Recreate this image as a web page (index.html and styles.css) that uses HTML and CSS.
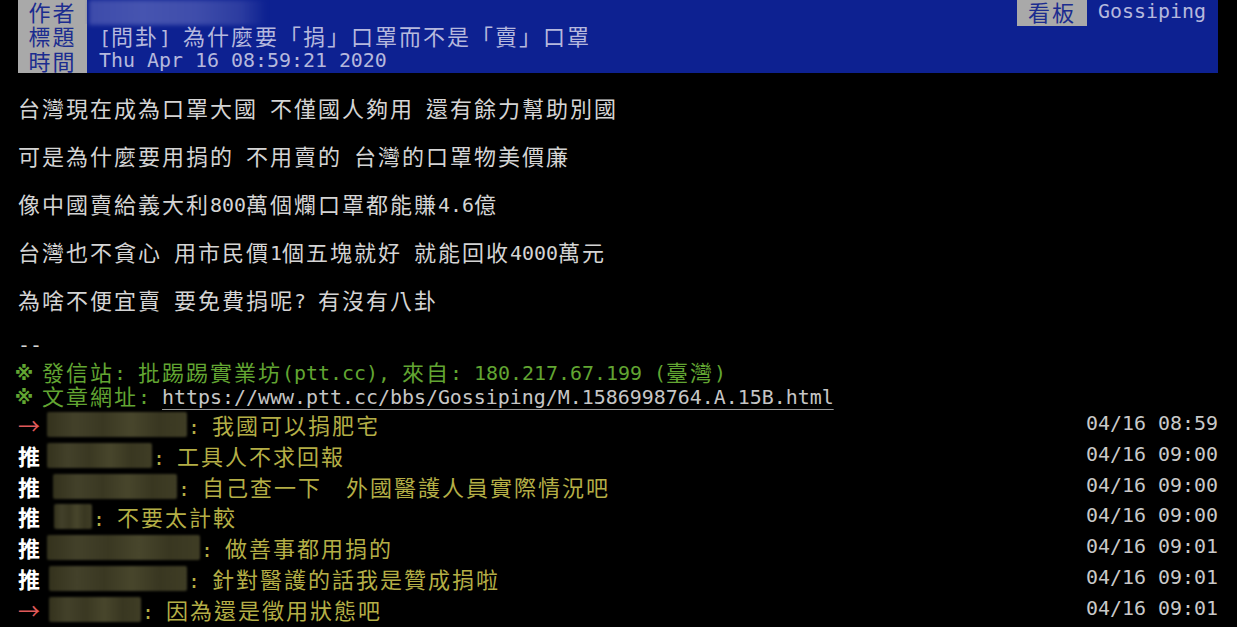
FILE: index.html
```html
<!DOCTYPE html>
<html lang="zh-Hant">
<head>
<meta charset="utf-8">
<title>[問卦] 為什麼要「捐」口罩而不是「賣」口罩</title>
<link rel="stylesheet" href="styles.css">
</head>
<body>
<div class="page">
  <header class="meta">
    <div class="meta-row">
      <span class="tag c">作者</span><span class="val author"><span class="author-blur"></span></span>
      <span class="spacer"></span>
      <span class="tag board c">看板</span><span class="val board-name">Gossiping</span>
    </div>
    <div class="meta-row">
      <span class="tag c">標題</span><span class="val">[<span class="c">問卦</span>] <span class="c">為什麼要「捐」口罩而不是「賣」口罩</span></span>
    </div>
    <div class="meta-row">
      <span class="tag c">時間</span><span class="val">Thu Apr 16 08:59:21 2020</span>
    </div>
  </header>

  <main class="content">
    <div class="line"></div>
    <div class="line"><span class="c">台灣現在成為口罩大國</span> <span class="c">不僅國人夠用</span> <span class="c">還有餘力幫助別國</span></div>
    <div class="line"></div>
    <div class="line"><span class="c">可是為什麼要用捐的</span> <span class="c">不用賣的</span> <span class="c">台灣的口罩物美價廉</span></div>
    <div class="line"></div>
    <div class="line"><span class="c">像中國賣給義大利</span>800<span class="c">萬個爛口罩都能賺</span>4.6<span class="c">億</span></div>
    <div class="line"></div>
    <div class="line"><span class="c">台灣也不貪心</span> <span class="c">用市民價</span>1<span class="c">個五塊就好</span> <span class="c">就能回收</span>4000<span class="c">萬元</span></div>
    <div class="line"></div>
    <div class="line"><span class="c">為啥不便宜賣</span> <span class="c">要免費捐呢</span>? <span class="c">有沒有八卦</span></div>
    <div class="line"></div>
    <div class="line">--</div>
    <div class="line green"><span class="kome">※</span> <span class="c">發信站</span>: <span class="c">批踢踢實業坊</span>(ptt.cc), <span class="c">來自</span>: 180.217.67.199 (<span class="c">臺灣</span>)</div>
    <div class="line green"><span class="kome">※</span> <span class="c">文章網址</span>: <a class="url" href="#">https://www.ptt.cc/bbs/Gossiping/M.1586998764.A.15B.html</a></div>

    <div class="push"><span class="ptag arrow c">→</span><span class="uid u1"></span><span class="pc">: <span class="c">我國可以捐肥宅</span></span><span class="ptime">04/16 08:59</span></div>
    <div class="push"><span class="ptag c">推</span><span class="uid u2"></span><span class="pc">: <span class="c">工具人不求回報</span></span><span class="ptime">04/16 09:00</span></div>
    <div class="push"><span class="ptag c">推</span><span class="uid u3"></span><span class="pc">: <span class="c">自己查一下</span>  <span class="c">外國醫護人員實際情況吧</span></span><span class="ptime">04/16 09:00</span></div>
    <div class="push"><span class="ptag c">推</span><span class="uid u4"></span><span class="pc">: <span class="c">不要太計較</span></span><span class="ptime">04/16 09:00</span></div>
    <div class="push"><span class="ptag c">推</span><span class="uid u5"></span><span class="pc">: <span class="c">做善事都用捐的</span></span><span class="ptime">04/16 09:01</span></div>
    <div class="push"><span class="ptag c">推</span><span class="uid u6"></span><span class="pc">: <span class="c">針對醫護的話我是贊成捐啦</span></span><span class="ptime">04/16 09:01</span></div>
    <div class="push"><span class="ptag arrow c">→</span><span class="uid u7"></span><span class="pc">: <span class="c">因為還是徵用狀態吧</span></span><span class="ptime">04/16 09:01</span></div>
  </main>
</div>
</body>
</html>
```

FILE: styles.css
```css
html, body {
  margin: 0;
  padding: 0;
  background: #000;
}

body {
  width: 1237px;
  height: 627px;
  overflow: hidden;
  font-family: "DejaVu Sans Mono", "Noto Sans CJK TC", monospace;
  font-size: 19.93px;
  line-height: 24px;
  color: #d4d4d4;
}

.page {
  padding-left: 18px;
  width: 1200px;
}

.c {
  font-family: "Noto Sans CJK TC", "Noto Sans CJK SC", sans-serif;
  font-size: 22px;
  letter-spacing: 2px;
  position: relative;
  top: 1px;
}

/* header */
.meta {
  height: 73px;
  background: #0d2191;
  display: flex;
  flex-direction: column;
}

.meta-row {
  display: flex;
  align-items: stretch;
  height: 24.33px;
  line-height: 23px;
  white-space: pre;
}

.meta .c {
  top: 0;
}

.tag {
  width: 69px;
  text-align: center;
  background: #a9a9a9;
  color: #1b2c8f;
}

.tag.board {
  width: 70px;
  height: 26px;
}

.val {
  padding-left: 12px;
  color: #b5b8dd;
}

.author {
  padding-left: 2px;
  display: flex;
}

.author-blur {
  width: 178px;
  height: 25px;
  background: linear-gradient(90deg, #3d4baa 0%, #4654b0 30%, #3f4dab 60%, #2c3ca0 85%, rgba(13, 33, 145, 0) 100%);
  filter: blur(2px);
}

.spacer {
  flex: 1;
}

.board-name {
  padding-left: 11px;
  padding-right: 12px;
}

/* body */
.content {
  padding-top: 1px;
}

.line {
  height: 24px;
  line-height: 16px;
  white-space: pre;
}

.green {
  color: #62a532;
}

.kome {
  display: inline-flex;
  justify-content: center;
  width: 12px;
  font-family: "DejaVu Sans", "Noto Sans CJK TC", sans-serif;
  font-size: 19px;
  font-weight: 700;
}

.url {
  color: #c6c6c6;
  text-decoration: underline;
  text-decoration-color: #9a9a9a;
  text-underline-offset: 5px;
}

/* pushes */
.push {
  display: flex;
  align-items: flex-start;
  height: 30.8px;
  line-height: 28px;
  white-space: pre;
}

.push .c {
  top: 0;
}

.ptag {
  width: 24px;
  color: #fff;
  font-weight: 700;
  letter-spacing: 0;
}

.ptag.arrow {
  color: #e05a5a;
  font-weight: 400;
}

.uid {
  display: block;
  height: 25px;
  margin-top: 2px;
  border-radius: 2px;
  background: linear-gradient(90deg, #34321d 0%, #43412a 20%, #3a3822 40%, #48462c 60%, #393721 80%, #3f3d25 100%);
  filter: blur(1px);
}

.u1 { margin-left: 5px; width: 140px; }
.u2 { margin-left: 5px; width: 105px; }
.u3 { margin-left: 11px; width: 124px; }
.u4 { margin-left: 12px; width: 38px; }
.u5 { margin-left: 5px; width: 153px; }
.u6 { margin-left: 7px; width: 138px; }
.u7 { margin-left: 7px; width: 92px; }

.pc {
  margin-left: 1px;
  color: #b4ae46;
}

.ptime {
  margin-left: auto;
  color: #c9c9c9;
}
```
